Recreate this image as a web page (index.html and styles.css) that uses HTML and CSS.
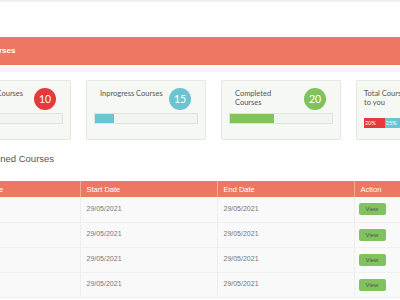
FILE: index.html
```html
<!DOCTYPE html>
<html>
<head>
    <meta charset="UTF-8">
    <meta name="viewport" content="width=device-width, initial-scale=1.0">
    <title>My Courses</title>
    <link rel="stylesheet" href="styles.css">
</head>
<body>
    <div class="page">
        <div class="top-nav"></div>

        <div class="title-bar">
            <h2>My Courses</h2>
        </div>
        <div class="sub-strip"></div>

        <div class="stats">
            <div class="stat-card">
                <div class="stat-head">
                    <span class="stat-title">Assigned Courses</span>
                    <span class="badge badge-red">10</span>
                </div>
                <div class="progress"><div class="progress-fill" style="width: 0%"></div></div>
            </div>
            <div class="stat-card">
                <div class="stat-head">
                    <span class="stat-title">Inprogress Courses</span>
                    <span class="badge badge-teal">15</span>
                </div>
                <div class="progress"><div class="progress-fill fill-teal" style="width: 19%"></div></div>
            </div>
            <div class="stat-card">
                <div class="stat-head">
                    <span class="stat-title">Completed<br>Courses</span>
                    <span class="badge badge-green">20</span>
                </div>
                <div class="progress"><div class="progress-fill fill-green" style="width: 43%"></div></div>
            </div>
            <div class="stat-card stat-card-total">
                <div class="stat-head">
                    <span class="stat-title">Total Courses assigned<br>to you</span>
                </div>
                <div class="stack-bar">
                    <span class="stack-part part-red" style="width: 20%">20%</span>
                    <span class="stack-part part-teal" style="width: 25%">25%</span>
                    <span class="stack-part part-green" style="width: 55%">55%</span>
                </div>
            </div>
        </div>

        <h3 class="section-title">Assigned Courses</h3>

        <table class="course-table">
            <colgroup>
                <col class="col-name">
                <col class="col-date">
                <col class="col-date">
                <col class="col-action">
            </colgroup>
            <thead>
                <tr>
                    <th>Course Name</th>
                    <th>Start Date</th>
                    <th>End Date</th>
                    <th>Action</th>
                </tr>
            </thead>
            <tbody>
                <tr>
                    <td>HTML</td>
                    <td>29/05/2021</td>
                    <td>29/05/2021</td>
                    <td><button class="view-btn">View</button></td>
                </tr>
                <tr>
                    <td>CSS</td>
                    <td>29/05/2021</td>
                    <td>29/05/2021</td>
                    <td><button class="view-btn">View</button></td>
                </tr>
                <tr>
                    <td>Java</td>
                    <td>29/05/2021</td>
                    <td>29/05/2021</td>
                    <td><button class="view-btn">View</button></td>
                </tr>
                <tr>
                    <td>PHP</td>
                    <td>29/05/2021</td>
                    <td>29/05/2021</td>
                    <td><button class="view-btn">View</button></td>
                </tr>
            </tbody>
        </table>
    </div>
</body>
</html>
```

FILE: styles.css
```css
:root {
    --salmon: #ec7863;
    --teal: #6cc4d2;
    --green: #80c35c;
    --red: #e8383b;
    --card-bg: #f5f8f3;
    --card-border: #e2e7df;
}

* {
    box-sizing: border-box;
    margin: 0;
    padding: 0;
}

body {
    font-family: "Liberation Sans", Arial, sans-serif;
    background: #fff;
    color: #666;
    overflow: hidden;
}

.page {
    margin-left: -60px;
    width: 640px;
}

.top-nav {
    height: 37px;
    border-top: 2px solid #f0f0f0;
    background: #fff;
}

.title-bar {
    height: 28px;
    background: var(--salmon);
    padding-left: 30px;
}

.title-bar h2 {
    color: #fff;
    font-size: 8px;
    font-weight: bold;
    line-height: 28px;
}

.sub-strip {
    height: 5px;
    margin-top: 2px;
    background: #f3f4f9;
}

.stats {
    display: flex;
    gap: 15px;
    margin-top: 8px;
    padding-left: 11px;
}

.stat-card {
    width: 120px;
    height: 60px;
    background: var(--card-bg);
    border: 1px solid var(--card-border);
    border-radius: 2px;
    padding: 7px 7px 0;
    font-family: Lato, sans-serif;
}

.stat-head {
    display: flex;
    justify-content: space-between;
    align-items: flex-start;
    padding-left: 6px;
    height: 22px;
}

.stat-title {
    font-size: 7.5px;
    line-height: 9px;
    color: #555;
    padding-top: 0.5px;
}

.badge {
    flex-shrink: 0;
    width: 22px;
    height: 22px;
    border-radius: 50%;
    margin-right: 7px;
    color: #fff;
    font-size: 10.5px;
    line-height: 22px;
    text-align: center;
}

.badge-red { background: var(--red); }
.badge-teal { background: var(--teal); }
.badge-green { background: var(--green); }

.progress {
    margin-top: 3px;
    height: 11px;
    background: #f1f5ef;
    border: 1px solid #dce3d9;
}

.progress-fill {
    height: 100%;
}

.fill-teal { background: var(--teal); }
.fill-green { background: var(--green); }

.stat-card-total .stat-head {
    padding-left: 0;
}

.stat-card-total .stat-title {
    white-space: nowrap;
}

.stack-bar {
    display: flex;
    margin-top: 8px;
    height: 10px;
}

.stack-part {
    color: #fff;
    font-size: 5.5px;
    line-height: 10px;
    padding-left: 1px;
}

.part-red { background: var(--red); }
.part-teal { background: var(--teal); }
.part-green { background: var(--green); }

.section-title {
    margin: 13px 0 0 37px;
    font-size: 9.5px;
    font-weight: normal;
    color: #555;
    line-height: 11px;
    height: 28px;
}

.course-table {
    margin-left: 11px;
    width: 560px;
    table-layout: fixed;
    border-collapse: collapse;
    font-size: 7px;
}

.col-name { width: 129px; }
.col-date { width: 137px; }
.col-action { width: 157px; }

.course-table th {
    background: var(--salmon);
    color: #fff;
    font-weight: normal;
    font-size: 7.5px;
    text-align: left;
    height: 16px;
    padding: 0 6px;
    border-left: 1px solid #f4aa9b;
}

.course-table th:first-child {
    border-left: none;
}

.course-table td {
    height: 25px;
    padding: 0 6px 2px;
    background: #f9f9f9;
    color: #777;
    border-bottom: 1px solid #f0f0f0;
    border-left: 1px solid #eeeeee;
    vertical-align: middle;
}

.course-table td:first-child {
    border-left: none;
}

.view-btn {
    display: inline-block;
    width: 27px;
    height: 12px;
    margin: 2px 0 0 -2px;
    background: var(--green);
    border: none;
    border-radius: 2px;
    color: #555;
    font-family: "Liberation Sans", Arial, sans-serif;
    font-size: 6px;
    line-height: 12px;
    cursor: pointer;
}
```
